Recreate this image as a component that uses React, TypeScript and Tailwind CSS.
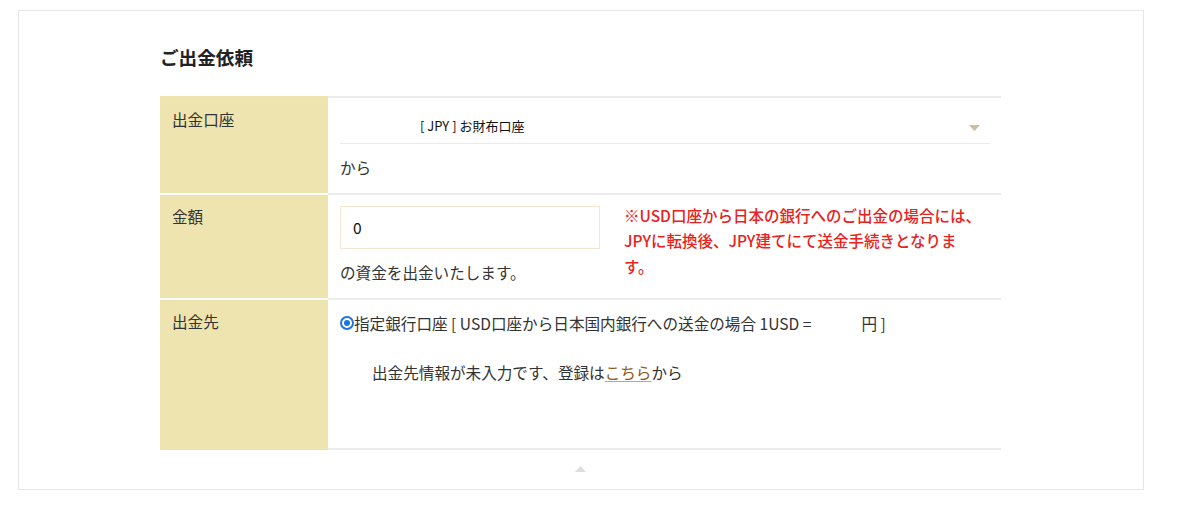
export default function App() {
    const font = { fontFamily: '"Noto Sans CJK JP", "Noto Sans", sans-serif' };

    return (
        <div className="min-h-screen bg-white pt-[10px] text-[#333]" style={font}>
            <div className="ml-[18px] h-[480px] w-[1126px] border border-[#e6e6e6] pl-[141px] pt-[34px]">
                <h2 className="text-[18.6px] font-bold leading-[24px] text-[#222]">
                    ご出金依頼
                </h2>

                <div className="mt-[27px] w-[841px]">
                    {/* 出金口座 */}
                    <div className="flex h-[97px]">
                        <div className="w-[168px] shrink-0 border-t-2 border-[#ece3b1] bg-[#ede4b0] pl-3 pt-[11px] text-[15.6px] leading-[20px]">
                            出金口座
                        </div>
                        <div className="flex-1 border-t-2 border-[#ececec] pl-3 pr-[11px] pt-[10px]">
                            <div className="flex h-[36px] items-center border-b border-[#f5e8d6] pr-[10px]">
                                <span className="pl-[80px] text-[13px] text-[#111]">
                                    [ JPY ] お財布口座
                                </span>
                                <svg
                                    className="ml-auto mt-1"
                                    width="11"
                                    height="6"
                                    viewBox="0 0 11 6"
                                >
                                    <path d="M0 0 H11 L5.5 6 Z" fill="#cbbd9f" />
                                </svg>
                            </div>
                            <p className="mt-[11px] text-[15.6px] leading-[24px]">から</p>
                        </div>
                    </div>

                    {/* 金額 */}
                    <div className="flex h-[105px]">
                        <div className="w-[168px] shrink-0 border-t-2 border-white bg-[#ede4b0] pl-3 pt-[11px] text-[15.6px] leading-[20px]">
                            金額
                        </div>
                        <div className="flex flex-1 border-t-2 border-[#ececec] pl-3 pt-[11px]">
                            <div>
                                <div className="flex h-[43px] w-[260px] items-center border border-[#f5e6d2] pl-3 text-[15.6px] text-[#111]">
                                    0
                                </div>
                                <p className="mt-[11px] text-[15.6px] leading-[24px]">
                                    の資金を出金いたします。
                                </p>
                            </div>
                            <p className="ml-[24px] mt-[-3px] w-[362px] text-[15.5px] font-medium leading-[25.3px] text-[#e8221c]">
                                ※USD口座から日本の銀行へのご出金の場合には、JPYに転換後、JPY建てにて送金手続きとなりま
                                <br />
                                す。
                            </p>
                        </div>
                    </div>

                    {/* 出金先 */}
                    <div className="flex h-[152px]">
                        <div className="w-[168px] shrink-0 border-t-2 border-white bg-[#ede4b0] pl-3 pt-[11px] text-[15.6px] leading-[20px]">
                            出金先
                        </div>
                        <div className="flex-1 border-y-2 border-[#ececec] pl-3 pt-[12px]">
                            <div className="flex items-center text-[15.6px] leading-[22px]">
                                <span className="flex h-[14px] w-[14px] items-center justify-center rounded-full border-2 border-[#1a73e8]">
                                    <span className="h-[6px] w-[6px] rounded-full bg-[#1a73e8]" />
                                </span>
                                <span>指定銀行口座 [ USD口座から日本国内銀行への送金の場合 1USD =</span>
                                <span className="w-[50px]" />
                                <span>円 ]</span>
                            </div>
                            <p className="mt-[27px] pl-8 text-[15.6px] leading-[22px]">
                                出金先情報が未入力です、登録は
                                <a href="#" className="text-[#8a5a17] underline decoration-[#c9a56f] underline-offset-2">
                                    こちら
                                </a>
                                から
                            </p>
                        </div>
                    </div>

                    <div className="flex justify-center pt-[16px]">
                        <svg width="11" height="6" viewBox="0 0 11 6">
                            <path d="M0 6 H11 L5.5 0 Z" fill="#dddddd" />
                        </svg>
                    </div>
                </div>
            </div>
        </div>
    );
}
